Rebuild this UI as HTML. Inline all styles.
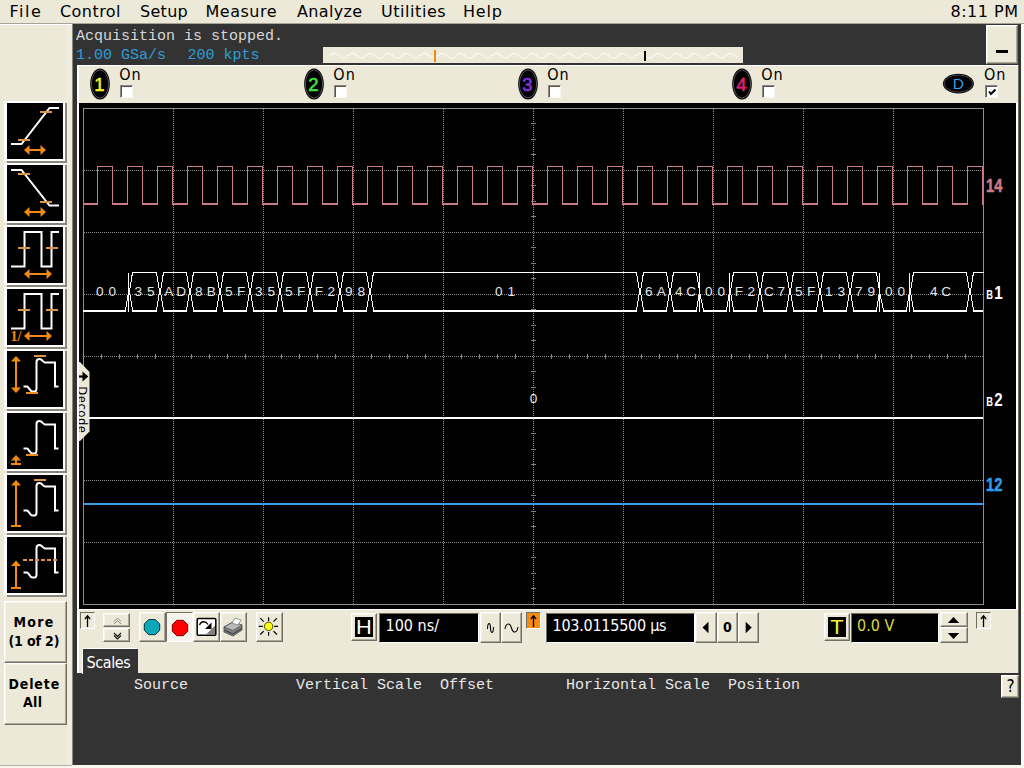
<!DOCTYPE html>
<html><head><meta charset="utf-8"><title>Scope</title>
<style>
html,body{margin:0;padding:0;}
body{width:1024px;height:768px;overflow:hidden;background:#ece9d8;position:relative;font-family:"DejaVu Sans Condensed","DejaVu Sans","Liberation Sans",sans-serif;color:#000;}
.a{position:absolute;}
.t{position:absolute;white-space:nowrap;line-height:1;}
.menu{font-size:16px;top:4px;letter-spacing:0.45px;font-family:"DejaVu Sans","Liberation Sans",sans-serif;}
.mono{font-family:"Liberation Mono","DejaVu Sans Mono",monospace;}
.btn{position:absolute;box-sizing:border-box;background:#ece9d8;border:1px solid;border-color:#fff #716f64 #716f64 #fff;box-shadow:inset -1px -1px 0 #aca899, inset 1px 1px 0 #f6f4ea;}
.sunk{position:absolute;box-sizing:border-box;border:1px solid;border-color:#716f64 #fff #fff #716f64;}
.fld{position:absolute;box-sizing:border-box;background:#000;border:1px solid;border-color:#716f64 #fff #fff #716f64;}
.ico{position:absolute;width:56px;height:56px;background:#000;box-shadow:0 0 0 2px #fff,-1px 0 0 2px #fff,2px 2px 0 2px #8a887c;}
.ico svg{position:absolute;left:0;top:0;}
.cb{position:absolute;box-sizing:border-box;width:13px;height:13px;background:#fff;border:1px solid;border-color:#8c8a80 #f8f7f0 #f8f7f0 #8c8a80;box-shadow:inset 1px 1px 0 #55534c;}
.on{font-size:16px;letter-spacing:1px;}
</style></head>
<body>
<div class="t menu" style="left:9.5px;letter-spacing:1.5px">File</div>
<div class="t menu" style="left:60px;letter-spacing:0.45px">Control</div>
<div class="t menu" style="left:140px;letter-spacing:0.3px">Setup</div>
<div class="t menu" style="left:205.5px;letter-spacing:0.5px">Measure</div>
<div class="t menu" style="left:297px;letter-spacing:0.35px">Analyze</div>
<div class="t menu" style="left:381px;letter-spacing:0.55px">Utilities</div>
<div class="t menu" style="left:463px;letter-spacing:0.8px">Help</div>
<div class="t menu" style="left:950.5px;letter-spacing:0.5px">8:11 PM</div>
<div class="a" style="left:0;top:23px;width:1024px;height:1px;background:#a6a396"></div>
<div class="a" style="left:0;top:24px;width:72px;height:1px;background:#fff"></div>
<div class="a" style="left:66px;top:25px;width:6px;height:740px;background:#efede0"></div>
<div class="a" style="left:72px;top:24px;width:1px;height:741px;background:#8a887c"></div>
<div class="a" style="left:0;top:765px;width:1024px;height:3px;background:#f8f7f0"></div><div class="a" style="left:0;top:765px;width:72px;height:1px;background:#b4b2a6"></div>
<div class="a" style="left:73px;top:24px;width:948px;height:741px;background:#333333"></div>
<div class="t mono" style="left:76px;top:28.5px;font-size:15px;color:#d8d8d8">Acquisition is stopped.</div>
<div class="t mono" style="left:76px;top:47.5px;font-size:15px;color:#2d9fd8">1.00 GSa/s<span style="margin-left:21.5px">200 kpts</span></div>
<svg class="a" style="left:323px;top:47px" width="420" height="16"><rect width="420" height="16" fill="#ece9d8"/>
<path d="M7,8.7 L8,7.9 L9,7.2 L10,6.7 L11,6.4 L12,6.4 L13,6.7 L14,7.2 L15,7.9 L16,8.7 L17,9.5 L18,10.2 L19,10.7 L20,11.0 L21,11.0 L22,10.7 L23,10.2 L24,9.5 L25,8.7 L26,7.9 L27,7.2 L28,6.7 L29,6.4 L30,6.4 L31,6.7 L32,7.2 L33,7.9 L34,8.7 L35,9.5 L36,10.2 L37,10.7 L38,11.0 L39,11.0 L40,10.7 L41,10.2 L42,9.5 L43,8.7 L44,7.9 L45,7.2 L46,6.7 L47,6.4 L48,6.4 L49,6.7 L50,7.2 L51,7.9 L52,8.7 L53,9.5 L54,10.2 L55,10.7 L56,11.0 L57,11.0 L58,10.7 L59,10.2 L60,9.5 L61,8.7 L62,7.9 L63,7.2 L64,6.7 L65,6.4 L66,6.4 L67,6.7 L68,7.2 L69,7.9 L70,8.7 L71,9.5 L72,10.2 L73,10.7 L74,11.0 L75,11.0 L76,10.7 L77,10.2 L78,9.5 L79,8.7 L80,7.9 L81,7.2 L82,6.7 L83,6.4 L84,6.4 L85,6.7 L86,7.2 L87,7.9 L88,8.7 L89,9.5 L90,10.2 L91,10.7 L92,11.0 L93,11.0 L94,10.7 L95,10.2 L96,9.5 L97,8.7 L98,7.9 L99,7.2 L100,6.7 L101,6.4 L102,6.4 L103,6.7 L104,7.2 L105,7.9 L106,8.7 L107,9.5 L108,10.2 L109,10.7 L110,11.0 L111,11.0 L112,10.7 L113,10.2 L114,9.5 L115,8.7 L116,7.9 L117,7.2 L118,6.7 L119,6.4 L120,6.4 L121,6.7 L122,7.2 L123,7.9 L124,8.7 L125,9.5 L126,10.2 L127,10.7 L128,11.0 L129,11.0 L130,10.7 L131,10.2 L132,9.5 L133,8.7 L134,7.9 L135,7.2 L136,6.7 L137,6.4 L138,6.4 L139,6.7 L140,7.2 L141,7.9 L142,8.7 L143,9.5 L144,10.2 L145,10.7 L146,11.0 L147,11.0 L148,10.7 L149,10.2 L150,9.5 L151,8.7 L152,7.9 L153,7.2 L154,6.7 L155,6.4 L156,6.4 L157,6.7 L158,7.2 L159,7.9 L160,8.7 L161,9.5 L162,10.2 L163,10.7 L164,11.0 L165,11.0 L166,10.7 L167,10.2 L168,9.5 L169,8.7 L170,7.9 L171,7.2 L172,6.7 L173,6.4 L174,6.4 L175,6.7 L176,7.2 L177,7.9 L178,8.7 L179,9.5 L180,10.2 L181,10.7 L182,11.0 L183,11.0 L184,10.7 L185,10.2 L186,9.5 L187,8.7 L188,7.9 L189,7.2 L190,6.7 L191,6.4 L192,6.4 L193,6.7 L194,7.2 L195,7.9 L196,8.7 L197,9.5 L198,10.2 L199,10.7 L200,11.0 L201,11.0 L202,10.7 L203,10.2 L204,9.5 L205,8.7 L206,7.9 L207,7.2 L208,6.7 L209,6.4 L210,6.4 L211,6.7 L212,7.2 L213,7.9 L214,8.7 L215,9.5 L216,10.2 L217,10.7 L218,11.0 L219,11.0 L220,10.7 L221,10.2 L222,9.5 L223,8.7 L224,7.9 L225,7.2 L226,6.7 L227,6.4 L228,6.4 L229,6.7 L230,7.2 L231,7.9 L232,8.7 L233,9.5 L234,10.2 L235,10.7 L236,11.0 L237,11.0 L238,10.7 L239,10.2 L240,9.5 L241,8.7 L242,7.9 L243,7.2 L244,6.7 L245,6.4 L246,6.4 L247,6.7 L248,7.2 L249,7.9 L250,8.7 L251,9.5 L252,10.2 L253,10.7 L254,11.0 L255,11.0 L256,10.7 L257,10.2 L258,9.5 L259,8.7 L260,7.9 L261,7.2 L262,6.7 L263,6.4 L264,6.4 L265,6.7 L266,7.2 L267,7.9 L268,8.7 L269,9.5 L270,10.2 L271,10.7 L272,11.0 L273,11.0 L274,10.7 L275,10.2 L276,9.5 L277,8.7 L278,7.9 L279,7.2 L280,6.7 L281,6.4 L282,6.4 L283,6.7 L284,7.2 L285,7.9 L286,8.7 L287,9.5 L288,10.2 L289,10.7 L290,11.0 L291,11.0 L292,10.7 L293,10.2 L294,9.5 L295,8.7 L296,7.9 L297,7.2 L298,6.7 L299,6.4 L300,6.4 L301,6.7 L302,7.2 L303,7.9 L304,8.7 L305,9.5 L306,10.2 L307,10.7 L308,11.0 L309,11.0 L310,10.7 L311,10.2 L312,9.5 L313,8.7 L314,7.9 L315,7.2 L316,6.7 L317,6.4 L318,6.4 L319,6.7 L320,7.2 L321,7.9 L322,8.7 L323,9.5 L324,10.2 L325,10.7 L326,11.0 L327,11.0 L328,10.7 L329,10.2 L330,9.5 L331,8.7 L332,7.9 L333,7.2 L334,6.7 L335,6.4 L336,6.4 L337,6.7 L338,7.2 L339,7.9 L340,8.7 L341,9.5 L342,10.2 L343,10.7 L344,11.0 L345,11.0 L346,10.7 L347,10.2 L348,9.5 L349,8.7 L350,7.9 L351,7.2 L352,6.7 L353,6.4 L354,6.4 L355,6.7 L356,7.2 L357,7.9 L358,8.7 L359,9.5 L360,10.2 L361,10.7 L362,11.0 L363,11.0 L364,10.7 L365,10.2 L366,9.5 L367,8.7 L368,7.9 L369,7.2 L370,6.7 L371,6.4 L372,6.4 L373,6.7 L374,7.2 L375,7.9 L376,8.7 L377,9.5 L378,10.2 L379,10.7 L380,11.0 L381,11.0 L382,10.7 L383,10.2 L384,9.5 L385,8.7 L386,7.9 L387,7.2 L388,6.7 L389,6.4 L390,6.4 L391,6.7 L392,7.2 L393,7.9 L394,8.7 L395,9.5 L396,10.2 L397,10.7 L398,11.0 L399,11.0 L400,10.7 L401,10.2 L402,9.5 L403,8.7 L404,7.9 L405,7.2 L406,6.7 L407,6.4 L408,6.4 L409,6.7 L410,7.2 L411,7.9 L412,8.7 L413,9.5 L414,10.2 L415,10.7" fill="none" stroke="#f8f6ee" stroke-width="1.5"/>
<rect x="111" y="3" width="2" height="12" fill="#f08a10"/><rect x="321" y="4" width="2" height="10" fill="#000"/></svg>
<div class="btn" style="left:986px;top:25px;width:32px;height:39px"><div class="a" style="left:9px;top:24px;width:12px;height:3px;background:#000"></div></div>
<div class="a" style="left:77px;top:65px;width:941px;height:608px;background:#ece9d8;border-top:1px solid #fff;border-left:2px solid #fff;box-sizing:border-box"></div>
<svg class="a" style="left:88.2px;top:67px" width="24" height="36"><ellipse cx="12" cy="17" rx="9.8" ry="15.4" fill="#000"/><ellipse cx="12" cy="17" rx="8.6" ry="14" fill="none" stroke="#777" stroke-width="0.7"/><text x="11.3" y="24" text-anchor="middle" font-family="Liberation Sans, sans-serif" font-size="18.5" fill="#f0f030" stroke="#f0f030" stroke-width="0.55">1</text></svg>
<div class="t on" style="left:119.2px;top:67px">On</div>
<div class="cb" style="left:120px;top:85px"></div>
<svg class="a" style="left:302.3px;top:67px" width="24" height="36"><ellipse cx="12" cy="17" rx="9.8" ry="15.4" fill="#000"/><ellipse cx="12" cy="17" rx="8.6" ry="14" fill="none" stroke="#777" stroke-width="0.7"/><text x="11.3" y="24" text-anchor="middle" font-family="Liberation Sans, sans-serif" font-size="18.5" fill="#40e040" stroke="#40e040" stroke-width="0.55">2</text></svg>
<div class="t on" style="left:333.3px;top:67px">On</div>
<div class="cb" style="left:334px;top:85px"></div>
<svg class="a" style="left:516.2px;top:67px" width="24" height="36"><ellipse cx="12" cy="17" rx="9.8" ry="15.4" fill="#000"/><ellipse cx="12" cy="17" rx="8.6" ry="14" fill="none" stroke="#777" stroke-width="0.7"/><text x="11.3" y="24" text-anchor="middle" font-family="Liberation Sans, sans-serif" font-size="18.5" fill="#8434e0" stroke="#8434e0" stroke-width="0.55">3</text></svg>
<div class="t on" style="left:547.2px;top:67px">On</div>
<div class="cb" style="left:548px;top:85px"></div>
<svg class="a" style="left:730.2px;top:67px" width="24" height="36"><ellipse cx="12" cy="17" rx="9.8" ry="15.4" fill="#000"/><ellipse cx="12" cy="17" rx="8.6" ry="14" fill="none" stroke="#777" stroke-width="0.7"/><text x="11.3" y="24" text-anchor="middle" font-family="Liberation Sans, sans-serif" font-size="18.5" fill="#e0207a" stroke="#e0207a" stroke-width="0.55">4</text></svg>
<div class="t on" style="left:761.2px;top:67px">On</div>
<div class="cb" style="left:762px;top:85px"></div>
<svg class="a" style="left:941px;top:70px" width="36" height="28"><ellipse cx="17.4" cy="13.6" rx="15.5" ry="9.8" fill="#000"/><ellipse cx="17.4" cy="13.6" rx="14.3" ry="8.6" fill="none" stroke="#667" stroke-width="0.7"/><text x="17.4" y="19" text-anchor="middle" font-family="Liberation Sans, sans-serif" font-size="15.5" fill="#2d9fe8">D</text></svg>
<div class="t on" style="left:984px;top:67px">On</div>
<div class="cb" style="left:985px;top:85px"><svg class="a" style="left:1px;top:1px" width="10" height="10"><path d="M2 4.5 L4 7 L8.5 2.5" fill="none" stroke="#000" stroke-width="2"/></svg></div>
<svg class="a" style="left:79px;top:103px" width="937" height="506" viewBox="79 103 937 506">
<rect x="79" y="103" width="937" height="506" fill="#000"/>
<g shape-rendering="crispEdges" stroke="#8e8e8e" stroke-width="1" fill="none">
<rect x="83.5" y="108.5" width="900" height="496"/>
<path d="M173.5 109V604M263.5 109V604M353.5 109V604M443.5 109V604M533.5 109V604M623.5 109V604M713.5 109V604M803.5 109V604M893.5 109V604M84 170.5H983M84 232.5H983M84 294.5H983M84 356.5H983M84 418.5H983M84 480.5H983M84 542.5H983" stroke-dasharray="1 1"/>
<path d="M101.5 354V359M119.5 354V359M137.5 354V359M155.5 354V359M191.5 354V359M209.5 354V359M227.5 354V359M245.5 354V359M281.5 354V359M299.5 354V359M317.5 354V359M335.5 354V359M371.5 354V359M389.5 354V359M407.5 354V359M425.5 354V359M461.5 354V359M479.5 354V359M497.5 354V359M515.5 354V359M551.5 354V359M569.5 354V359M587.5 354V359M605.5 354V359M641.5 354V359M659.5 354V359M677.5 354V359M695.5 354V359M731.5 354V359M749.5 354V359M767.5 354V359M785.5 354V359M821.5 354V359M839.5 354V359M857.5 354V359M875.5 354V359M911.5 354V359M929.5 354V359M947.5 354V359M965.5 354V359M531 123.5H536M531 139.5H536M531 154.5H536M531 185.5H536M531 201.5H536M531 216.5H536M531 247.5H536M531 263.5H536M531 278.5H536M531 309.5H536M531 325.5H536M531 340.5H536M531 371.5H536M531 387.5H536M531 402.5H536M531 433.5H536M531 449.5H536M531 464.5H536M531 495.5H536M531 511.5H536M531 526.5H536M531 557.5H536M531 573.5H536M531 588.5H536" stroke="#808080"/>
</g>
<path d="M83.5 204.5H97.5V166.5H112.5V204.5H127.5V166.5H142.5V204.5H157.5V166.5H172.5V204.5H187.5V166.5H202.5V204.5H217.5V166.5H232.5V204.5H247.5V166.5H262.5V204.5H277.5V166.5H292.5V204.5H307.5V166.5H322.5V204.5H337.5V166.5H352.5V204.5H367.5V166.5H382.5V204.5H397.5V166.5H412.5V204.5H427.5V166.5H442.5V204.5H457.5V166.5H472.5V204.5H487.5V166.5H502.5V204.5H517.5V166.5H532.5V204.5H547.5V166.5H562.5V204.5H577.5V166.5H592.5V204.5H607.5V166.5H622.5V204.5H637.5V166.5H652.5V204.5H667.5V166.5H682.5V204.5H697.5V166.5H712.5V204.5H727.5V166.5H742.5V204.5H757.5V166.5H772.5V204.5H787.5V166.5H802.5V204.5H817.5V166.5H832.5V204.5H847.5V166.5H862.5V204.5H877.5V166.5H892.5V204.5H907.5V166.5H922.5V204.5H937.5V166.5H952.5V204.5H967.5V166.5H982.5V204.5H983.5" fill="none" stroke="#cc7c86" stroke-width="1" shape-rendering="crispEdges"/>
<path d="M83 204H98M112 204H128M142 204H158M172 204H188M202 204H218M232 204H248M262 204H278M292 204H308M322 204H338M352 204H368M382 204H398M412 204H428M442 204H458M472 204H488M502 204H518M532 204H548M562 204H578M592 204H608M622 204H638M652 204H668M682 204H698M712 204H728M742 204H758M772 204H788M802 204H818M832 204H848M862 204H878M892 204H908M922 204H938M952 204H968M982 204H984" fill="none" stroke="#cc7c86" stroke-width="2" shape-rendering="crispEdges"/>
<path d="M125.5 310.5L128.5 291.5M128.5 272.5V311.5M129.5 291.5L132.5 272.5H156.5L159.5 291.5L156.5 310.5M132.5 310.5L129.5 291.5M160.5 291.5L163.5 272.5H186.5L189.5 291.5L186.5 310.5M163.5 310.5L160.5 291.5M190.5 291.5L193.5 272.5H216.5L219.5 291.5L216.5 310.5M193.5 310.5L190.5 291.5M220.5 291.5L223.5 272.5H246.5L249.5 291.5L246.5 310.5M223.5 310.5L220.5 291.5M250.5 291.5L253.5 272.5H276.5L279.5 291.5L276.5 310.5M253.5 310.5L250.5 291.5M280.5 291.5L283.5 272.5H306.5L309.5 291.5L306.5 310.5M283.5 310.5L280.5 291.5M310.5 291.5L313.5 272.5H336.5L339.5 291.5L336.5 310.5M313.5 310.5L310.5 291.5M340.5 291.5L343.5 272.5H366.5L369.5 291.5L366.5 310.5M343.5 310.5L340.5 291.5M370.5 291.5L373.5 272.5H636.5L639.5 291.5L636.5 310.5M373.5 310.5L370.5 291.5M640.5 291.5L643.5 272.5H666.5L669.5 291.5L666.5 310.5M643.5 310.5L640.5 291.5M670.5 291.5L673.5 272.5H696.5L699.5 291.5L696.5 310.5M673.5 310.5L670.5 291.5M699.5 272.5V311.5M699.5 291.5L703.5 310.5M726.5 310.5L729.5 291.5M729.5 272.5V311.5M730.5 291.5L733.5 272.5H756.5L759.5 291.5L756.5 310.5M733.5 310.5L730.5 291.5M760.5 291.5L763.5 272.5H786.5L789.5 291.5L786.5 310.5M763.5 310.5L760.5 291.5M790.5 291.5L793.5 272.5H816.5L819.5 291.5L816.5 310.5M793.5 310.5L790.5 291.5M820.5 291.5L823.5 272.5H846.5L849.5 291.5L846.5 310.5M823.5 310.5L820.5 291.5M850.5 291.5L853.5 272.5H876.5L879.5 291.5L876.5 310.5M853.5 310.5L850.5 291.5M879.5 272.5V311.5M879.5 291.5L883.5 310.5M906.5 310.5L909.5 291.5M909.5 272.5V311.5M910.5 291.5L913.5 272.5H966.5L969.5 291.5L966.5 310.5M913.5 310.5L910.5 291.5M970.5 291.5L973.5 272.5H983.5M970.5 291.5L973.5 310.5" fill="none" stroke="#ffffff" stroke-width="1" shape-rendering="crispEdges"/>
<path d="M83 310.5H126M132 310.5H157M163 310.5H187M193 310.5H217M223 310.5H247M253 310.5H277M283 310.5H307M313 310.5H337M343 310.5H367M373 310.5H637M643 310.5H667M673 310.5H697M703 310.5H727M733 310.5H757M763 310.5H787M793 310.5H817M823 310.5H847M853 310.5H877M883 310.5H907M913 310.5H967M973 310.5H983" fill="none" stroke="#ffffff" stroke-width="2" transform="translate(0,0.5)" shape-rendering="crispEdges"/>
<g font-family="Liberation Sans, sans-serif" font-size="13.6" fill="#e4e4e4" text-anchor="middle">
<text x="99.8 112.2" y="296.2">00</text>
<text x="138.3 150.7" y="296.2">35</text>
<text x="168.8 181.2" y="296.2">AD</text>
<text x="198.8 211.2" y="296.2">8B</text>
<text x="228.8 241.2" y="296.2">5F</text>
<text x="258.8 271.2" y="296.2">35</text>
<text x="288.8 301.2" y="296.2">5F</text>
<text x="318.8 331.2" y="296.2">F2</text>
<text x="348.8 361.2" y="296.2">98</text>
<text x="498.8 511.2" y="296.2">01</text>
<text x="648.8 661.2" y="296.2">6A</text>
<text x="678.8 691.2" y="296.2">4C</text>
<text x="708.8 721.2" y="296.2">00</text>
<text x="738.8 751.2" y="296.2">F2</text>
<text x="768.8 781.2" y="296.2">C7</text>
<text x="798.8 811.2" y="296.2">5F</text>
<text x="828.8 841.2" y="296.2">13</text>
<text x="858.8 871.2" y="296.2">79</text>
<text x="888.8 901.2" y="296.2">00</text>
<text x="933.8 946.2" y="296.2">4C</text>
<text x="533.5" y="403">0</text>
</g>
<rect x="83" y="417" width="900" height="2" fill="#fff"/>
<rect x="83" y="503" width="900" height="2" fill="#3a9be0"/>
<g font-family="Liberation Sans, sans-serif" font-weight="bold">
<text transform="translate(986,192) scale(0.82,1)" font-size="18" fill="#cc7c86" stroke="#cc7c86" stroke-width="0.5">14</text>
<text transform="translate(986.3,299) scale(0.72,1)" font-size="13" fill="#fff">B</text><text transform="translate(994.3,299) scale(0.82,1)" font-size="18.4" fill="#fff">1</text>
<text transform="translate(986.3,405.5) scale(0.72,1)" font-size="13" fill="#fff">B</text><text transform="translate(994.3,405.5) scale(0.82,1)" font-size="18.4" fill="#fff">2</text>
<text transform="translate(986,491.3) scale(0.82,1)" font-size="18" fill="#2d9fe8" stroke="#2d9fe8" stroke-width="0.5">12</text>
</g>
<path d="M79 362 L80 362 L89.5 372 L89.5 431.5 L80 441 L79 441 Z" fill="#ece9d8"/>
<path d="M79 376.5H84" fill="none" stroke="#000" stroke-width="2.2"/><polygon points="82.5,371.5 88.3,376.5 82.5,381.5" fill="#000"/>
<text transform="translate(78.3,386.3) rotate(90)" font-family="DejaVu Sans Condensed, DejaVu Sans, Liberation Sans, sans-serif" font-size="13" letter-spacing="0.45" fill="#000">Decode</text>
</svg>
<div class="a" style="left:1016px;top:103px;width:2px;height:507px;background:#fff"></div><div class="a" style="left:79px;top:609px;width:939px;height:1px;background:#fff"></div>
<div class="a" style="left:1021px;top:24px;width:3px;height:741px;background:#faf9f2"></div>
<div class="a" style="left:1018px;top:65px;width:1px;height:608px;background:#6e6c62"></div>
<div class="sunk" style="left:80px;top:612px;width:15px;height:17px;background:#ece9d8"><svg class="a" style="left:0;top:0" width="13" height="15"><path d="M6.5 14V3.5 M3.9 6L6.5 2.8L9.1 6" fill="none" stroke="#000" stroke-width="1.3"/></svg></div>
<div class="btn" style="left:103px;top:613px;width:27px;height:14px"><svg class="a" style="left:7.5px;top:1.5px" width="12" height="10"><path d="M2 5.5L5.5 2L9 5.5M2 8L5.5 4.5L9 8" fill="none" stroke="#8a8a84" stroke-width="1"/></svg></div>
<div class="btn" style="left:103px;top:628px;width:27px;height:14px"><svg class="a" style="left:7.5px;top:1.5px" width="12" height="10"><path d="M2 2L5.5 5.5L9 2M2 4.5L5.5 8L9 4.5" fill="none" stroke="#111" stroke-width="1.1"/></svg></div>
<div class="btn" style="left:139px;top:612px;width:27px;height:30px"><svg class="a" style="left:0;top:0" width="25" height="28"><polygon points="8.7,6.5 15.3,6.5 19.7,11 19.7,17.3 15.3,21.7 8.7,21.7 4.3,17.3 4.3,11" fill="#0ca8b8" stroke="#00383c" stroke-width="1"/></svg></div>
<div class="a" style="left:166px;top:612px;width:27px;height:30px;box-sizing:border-box;background:#f6f4ec;border:1px solid;border-color:#716f64 #fff #fff #716f64"><svg class="a" style="left:0;top:0" width="25" height="28"><polygon points="9.7,7.3 16.3,7.3 20.7,11.8 20.7,18.2 16.3,22.7 9.7,22.7 5.3,18.2 5.3,11.8" fill="#ff0000" stroke="#800000" stroke-width="1"/></svg></div>
<div class="btn" style="left:193px;top:612px;width:27px;height:30px"><svg class="a" style="left:0;top:0" width="25" height="28"><rect x="3.2" y="5.5" width="18.6" height="16.8" rx="1" fill="#fff" stroke="#000" stroke-width="1.5"/><polygon points="21,12.5 21,21.5 12,21.5" fill="#808080"/><path d="M5.5 12 C7 8 11.5 7.5 14 11.5" fill="none" stroke="#000" stroke-width="1.3"/><polygon points="17.5,9.5 17.5,16 11,16" fill="#000"/></svg></div>
<div class="btn" style="left:220px;top:612px;width:27px;height:30px"><svg class="a" style="left:0;top:0" width="25" height="28"><polygon points="3,14 12,9 21,12 21,17 12,23 3,19" fill="#808080" stroke="#404040" stroke-width="0.8"/><polygon points="3,14 12,9 21,12 12,17.5" fill="#b8b8b8" stroke="#404040" stroke-width="0.6"/><polygon points="11,10 14,5 20,7 17,12" fill="#fff" stroke="#606060" stroke-width="0.6"/><path d="M4 17.5L12 21L20.5 15.5" stroke="#303030" fill="none"/></svg></div>
<div class="btn" style="left:256px;top:612px;width:27px;height:30px"><svg class="a" style="left:0;top:0" width="25" height="28"><path d="M11.6 4.3V8.2M11.6 19V22.8M1.8 13.4H5.8M17.2 13.4H21M3.3 5.2L6.7 8.7M19.9 5.2L16.5 8.7M3.3 21.5L6.7 18.1M19.9 21.5L16.5 18.1" stroke="#000" stroke-width="1.2" fill="none"/><circle cx="11.6" cy="13.4" r="4.2" fill="#ffff10" stroke="#3c3c00" stroke-width="0.9"/></svg></div>
<div class="btn" style="left:351px;top:613px;width:26px;height:28px"><svg class="a" style="left:0;top:0" width="24" height="26"><rect x="3" y="3" width="18" height="20" fill="#000"/><text transform="translate(12,20) scale(1.12,1)" text-anchor="middle" font-family="Liberation Sans, sans-serif" font-size="19.5" fill="#fff">H</text></svg></div>
<div class="fld" style="left:379px;top:613px;width:100px;height:30px"></div>
<div class="t" style="left:385.5px;top:618px;font-size:16px;color:#fff">100 ns/</div>
<div class="btn" style="left:480px;top:612px;width:21px;height:31px"><svg class="a" style="left:0;top:0" width="19" height="29"><path d="M6.5 16 C6.5 9 9.5 9 9.5 15 C9.5 21 12.5 21 12.5 14" fill="none" stroke="#000" stroke-width="1.1"/></svg></div>
<div class="btn" style="left:501px;top:612px;width:21px;height:31px"><svg class="a" style="left:0;top:0" width="19" height="29"><path d="M3 16 C4 9.5 8 9.5 9.5 15 C11 20.5 15 20.5 16 14" fill="none" stroke="#000" stroke-width="1.1"/></svg></div>
<div class="sunk" style="left:526px;top:612px;width:15px;height:17px;background:#f48c10"><svg class="a" style="left:0;top:0" width="13" height="15"><path d="M6.5 14V3.5 M3.9 6L6.5 2.8L9.1 6" fill="none" stroke="#000" stroke-width="1.3"/></svg></div>
<div class="fld" style="left:546px;top:613px;width:149px;height:30px"></div>
<div class="t" style="left:552.5px;top:618px;font-size:16px;letter-spacing:-0.25px;color:#fff">103.0115500 µs</div>
<div class="btn" style="left:695px;top:612px;width:22px;height:31px"><svg class="a" style="left:0;top:0" width="20" height="29"><polygon points="6.5,14.5 12.5,8.7 12.5,20.3" fill="#000"/></svg></div>
<div class="btn" style="left:717px;top:612px;width:21px;height:31px"><div class="t" style="left:0;top:7px;width:19px;text-align:center;font-size:14px;font-weight:bold">0</div></div>
<div class="btn" style="left:738px;top:612px;width:21px;height:31px"><svg class="a" style="left:0;top:0" width="19" height="29"><polygon points="12.7,14.5 6.7,8.7 6.7,20.3" fill="#000"/></svg></div>
<div class="btn" style="left:824px;top:613px;width:26px;height:28px"><svg class="a" style="left:0;top:0" width="24" height="26"><rect x="3" y="3" width="18" height="20" fill="#000"/><text transform="translate(12,20) scale(1.12,1)" text-anchor="middle" font-family="Liberation Sans, sans-serif" font-size="19.5" fill="#f4f430">T</text></svg></div>
<div class="fld" style="left:851px;top:613px;width:88px;height:30px"></div>
<div class="t" style="left:857px;top:618px;font-size:16px;color:#d8d840">0.0 V</div>
<div class="btn" style="left:940px;top:612px;width:28px;height:15px"><svg class="a" style="left:0;top:0" width="26" height="13"><polygon points="6.8,10 18.2,10 12.5,4" fill="#000"/></svg></div>
<div class="btn" style="left:940px;top:627px;width:28px;height:16px"><svg class="a" style="left:0;top:0" width="26" height="14"><polygon points="6.8,5 18.2,5 12.5,11" fill="#000"/></svg></div>
<div class="sunk" style="left:976px;top:612px;width:15px;height:17px;background:#ece9d8"><svg class="a" style="left:0;top:0" width="13" height="15"><path d="M6.5 14V3.5 M3.9 6L6.5 2.8L9.1 6" fill="none" stroke="#000" stroke-width="1.3"/></svg></div>
<div class="a" style="left:82px;top:648px;width:56px;height:26px;background:#333333;border-top:1px solid #fff;border-left:1px solid #fff;box-sizing:border-box"></div>
<div class="t" style="left:86.5px;top:655px;font-size:16px;letter-spacing:-0.4px;color:#fff">Scales</div>
<div class="t mono" style="left:134px;top:678px;font-size:15px;color:#e8e8e8">Source</div>
<div class="t mono" style="left:296px;top:678px;font-size:15px;color:#e8e8e8">Vertical Scale</div>
<div class="t mono" style="left:440px;top:678px;font-size:15px;color:#e8e8e8">Offset</div>
<div class="t mono" style="left:566px;top:678px;font-size:15px;color:#e8e8e8">Horizontal Scale</div>
<div class="t mono" style="left:728px;top:678px;font-size:15px;color:#e8e8e8">Position</div>
<div class="btn" style="left:1001px;top:675px;width:18px;height:23px"><div class="t" style="left:4.5px;top:2px;font-size:17px">?</div></div>
<div class="ico" style="left:7px;top:103px"><svg width="56" height="56" viewBox="0 0 56 56"><path d="M4 41H14.5L42.5 5H52" fill="none" stroke="#fff" stroke-width="2"/><path d="M11 37H23 M33 9H45" stroke="#dc9448" stroke-width="2"/><path d="M20 47H36" stroke="#f08a10" stroke-width="2"/><polygon points="17,47 22.5,42 22.5,52" fill="#f08a10"/><polygon points="39,47 33.5,42 33.5,52" fill="#f08a10"/></svg></div>
<div class="ico" style="left:7px;top:165px"><svg width="56" height="56" viewBox="0 0 56 56"><path d="M4 5H14.5L42.5 40.5H52" fill="none" stroke="#fff" stroke-width="2"/><path d="M11 9H23 M33 37H45" stroke="#dc9448" stroke-width="2"/><path d="M20 47H36" stroke="#f08a10" stroke-width="2"/><polygon points="17,47 22.5,42 22.5,52" fill="#f08a10"/><polygon points="39,47 33.5,42 33.5,52" fill="#f08a10"/></svg></div>
<div class="ico" style="left:7px;top:227px"><svg width="56" height="56" viewBox="0 0 56 56"><path d="M4 39.5H17.5V5H34.5V39.5H44.5V5H52" fill="none" stroke="#fff" stroke-width="2"/><path d="M11 21H23 M39 21H51" stroke="#dc9448" stroke-width="2"/><path d="M20 47H42" stroke="#f08a10" stroke-width="2"/><polygon points="17,47 22.5,42 22.5,52" fill="#f08a10"/><polygon points="45,47 39.5,42 39.5,52" fill="#f08a10"/></svg></div>
<div class="ico" style="left:7px;top:289px"><svg width="56" height="56" viewBox="0 0 56 56"><path d="M4 39.5H17.5V5H34.5V39.5H44.5V5H52" fill="none" stroke="#fff" stroke-width="2"/><path d="M11 21H23 M39 21H51" stroke="#dc9448" stroke-width="2"/><path d="M20 47H42" stroke="#f08a10" stroke-width="2"/><polygon points="17,47 22.5,42 22.5,52" fill="#f08a10"/><polygon points="45,47 39.5,42 39.5,52" fill="#f08a10"/><text x="3.5" y="51.5" font-family="Liberation Serif, serif" font-weight="bold" font-size="14" fill="#f08a10">1/</text></svg></div>
<div class="ico" style="left:7px;top:351px"><svg width="56" height="56" viewBox="0 0 56 56"><path d="M16.5 35.5H20 C22 36 23 40.5 25.5 40.5H27.5 C29 40.5 29.5 39 29.5 37V11 C29.5 8.5 31 8 32.5 8 C35 8 36.5 11.5 38 11.5H48V35.5H51.5" fill="none" stroke="#fff" stroke-width="2"/><path d="M27 5H39" stroke="#dc9448" stroke-width="2"/><path d="M19 42H31" stroke="#f08a10" stroke-width="2"/><path d="M9 8V39" stroke="#f08a10" stroke-width="2"/><polygon points="9,5 4,10.5 14,10.5" fill="#f08a10"/><polygon points="9,42 4,36.5 14,36.5" fill="#f08a10"/></svg></div>
<div class="ico" style="left:7px;top:413px"><svg width="56" height="56" viewBox="0 0 56 56"><path d="M16.5 35.5H20 C22 36 23 40.5 25.5 40.5H27.5 C29 40.5 29.5 39 29.5 37V11 C29.5 8.5 31 8 32.5 8 C35 8 36.5 11.5 38 11.5H48V35.5H51.5" fill="none" stroke="#fff" stroke-width="2"/><path d="M19 42H31" stroke="#f08a10" stroke-width="2"/><polygon points="9,42 4,47.5 14,47.5" fill="#f08a10"/><path d="M9 47V51 M4 51H14" stroke="#f08a10" stroke-width="2"/></svg></div>
<div class="ico" style="left:7px;top:475px"><svg width="56" height="56" viewBox="0 0 56 56"><path d="M16.5 35.5H20 C22 36 23 40.5 25.5 40.5H27.5 C29 40.5 29.5 39 29.5 37V11 C29.5 8.5 31 8 32.5 8 C35 8 36.5 11.5 38 11.5H48V35.5H51.5" fill="none" stroke="#fff" stroke-width="2"/><path d="M27 5H39" stroke="#dc9448" stroke-width="2"/><path d="M9 8V51" stroke="#f08a10" stroke-width="2"/><polygon points="9,5 4,10.5 14,10.5" fill="#f08a10"/><path d="M4 51H14" stroke="#f08a10" stroke-width="2"/></svg></div>
<div class="ico" style="left:7px;top:537px"><svg width="56" height="56" viewBox="0 0 56 56"><path d="M16.5 35.5H20 C22 36 23 40.5 25.5 40.5H27.5 C29 40.5 29.5 39 29.5 37V11 C29.5 8.5 31 8 32.5 8 C35 8 36.5 11.5 38 11.5H48V35.5H51.5" fill="none" stroke="#fff" stroke-width="2"/><path d="M16 23H50" stroke="#dc9448" stroke-width="2" stroke-dasharray="4 2"/><path d="M9 26.5V51" stroke="#f08a10" stroke-width="2"/><polygon points="9,23.5 4,29.0 14,29.0" fill="#f08a10"/><path d="M4 51H14" stroke="#f08a10" stroke-width="2"/></svg></div>
<div class="btn" style="left:4px;top:601px;width:63px;height:62px"></div>
<div class="btn" style="left:4px;top:663px;width:63px;height:62px"></div>
<div class="t" style="left:13.5px;top:615px;font-size:14px;font-weight:bold;letter-spacing:1.3px">More</div>
<div class="t" style="left:8.5px;top:634px;font-size:14px;font-weight:bold;letter-spacing:-0.15px">(1 of 2)</div>
<div class="t" style="left:8.5px;top:677px;font-size:14px;font-weight:bold;letter-spacing:0.85px">Delete</div>
<div class="t" style="left:23px;top:695px;font-size:14px;font-weight:bold;letter-spacing:0.3px">All</div>
</body></html>
